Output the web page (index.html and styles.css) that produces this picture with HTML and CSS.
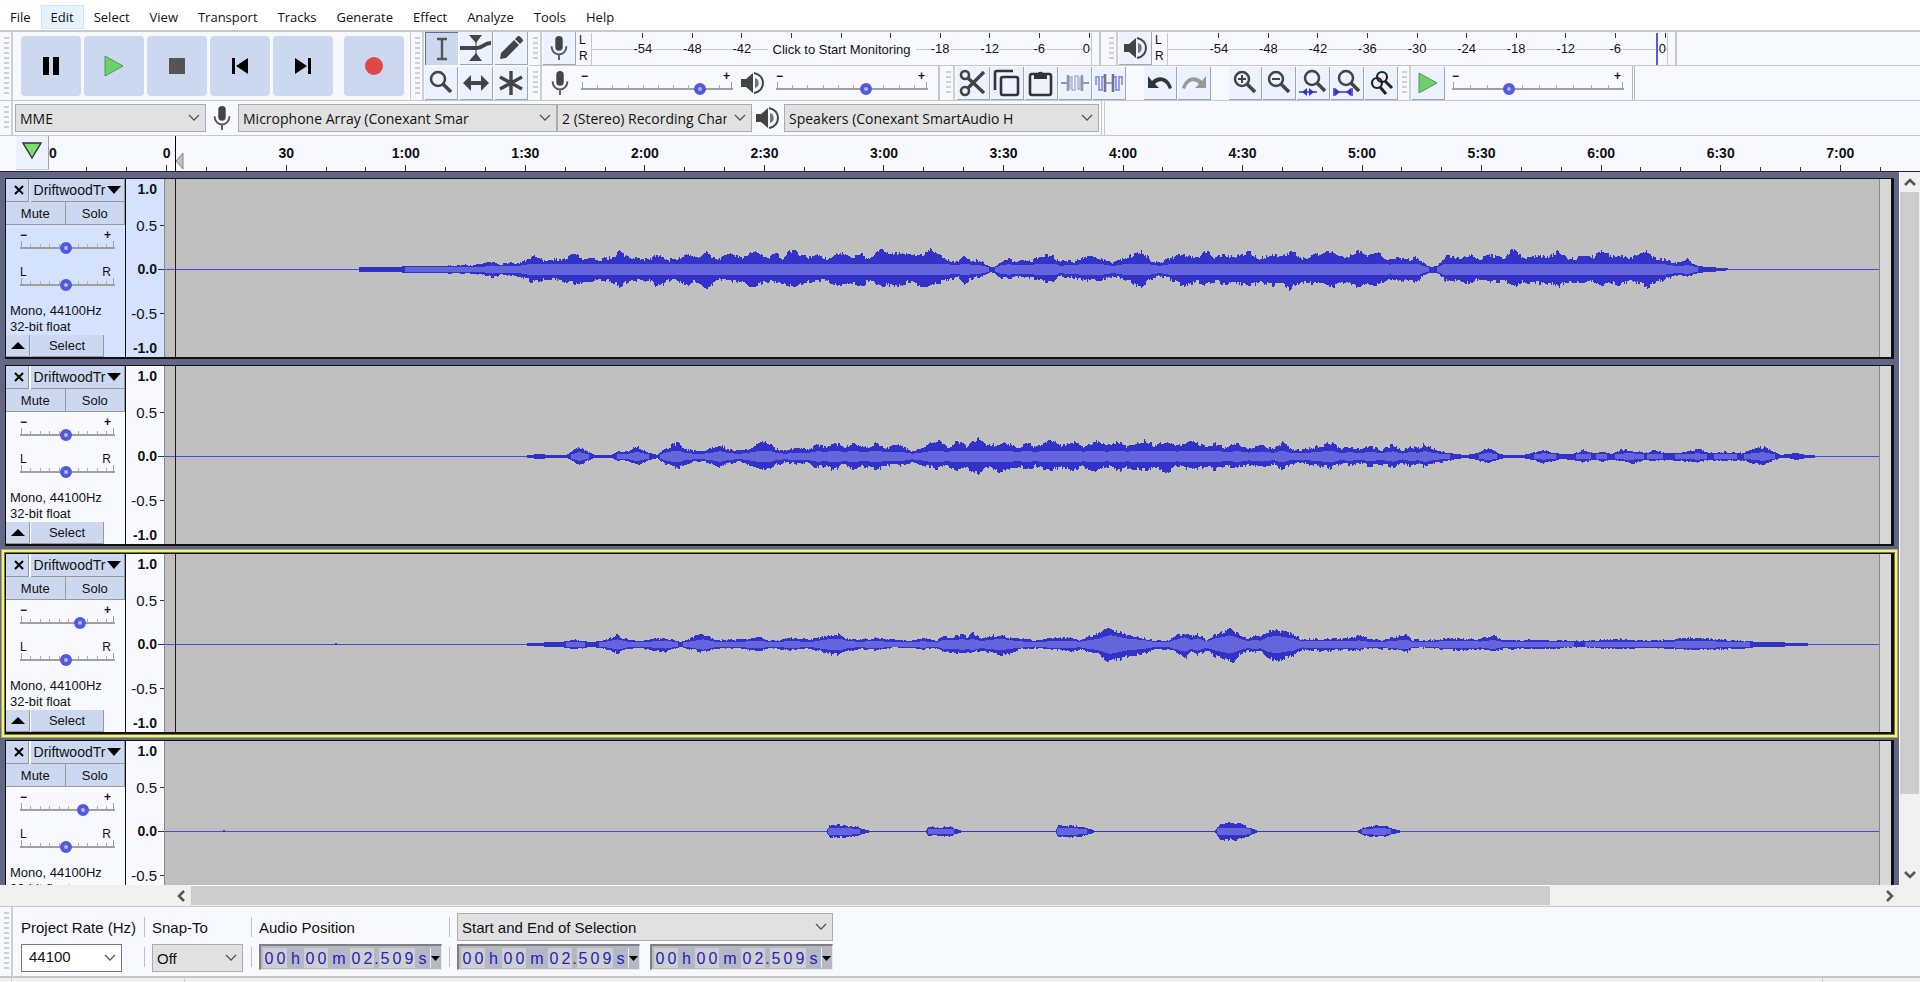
FILE: index.html
```html
<!DOCTYPE html>
<html lang="en">
<head>
<meta charset="utf-8">
<title>Audacity</title>
<link rel="stylesheet" href="styles.css">
</head>
<body>
<svg class="defs" aria-hidden="true">
  <symbol id="i-mic" viewBox="0 0 20 28"><rect x="6" y="1" width="8" height="16" rx="4" fill="#444"/><path d="M2 12c0 12 16 12 16 0M10 21v6" fill="none" stroke="#555" stroke-width="2"/></symbol>
  <symbol id="i-speaker" viewBox="0 0 24 24"><path d="M1 8h5l7-6v20l-7-6H1z" fill="#444"/><path d="M14 2c12 2 12 18 0 20" fill="none" stroke="#444" stroke-width="2"/><path d="M15 7c5 1 5 9 0 10z" fill="#777"/></symbol>
  <symbol id="i-chev" viewBox="0 0 12 12"><path d="M1 3l5 5 5-5" fill="none" stroke="#555" stroke-width="1.3"/></symbol>
  <symbol id="i-play" viewBox="0 0 20 22"><path d="M1 1v20l18-10z" fill="#6fd06b" stroke="#4f9a50" stroke-width="1"/></symbol>
  <symbol id="i-lens" viewBox="0 0 26 26"><circle cx="10" cy="9" r="7" fill="none" stroke="#444" stroke-width="2.5"/><path d="M15 14l8 8" stroke="#444" stroke-width="3.5"/></symbol>
</svg>

<nav class="menubar" aria-label="Main menu">
  <button>File</button><button class="hot">Edit</button><button>Select</button><button>View</button><button>Transport</button><button>Tracks</button><button>Generate</button><button>Effect</button><button>Analyze</button><button>Tools</button><button>Help</button>
</nav>

<div class="dock">
  <section class="bar transport" aria-label="Transport">
    <i class="grip"></i>
    <button aria-label="Pause"><svg width="18" height="18"><path d="M1 0h6v18H1zM11 0h6v18h-6z"/></svg></button>
    <button aria-label="Play"><svg width="20" height="22"><use href="#i-play"/></svg></button>
    <button aria-label="Stop"><svg width="16" height="16"><path d="M0 0h16v16H0z" fill="#555"/></svg></button>
    <button aria-label="Skip to start"><svg width="18" height="16"><path d="M1 0h3v16H1zM17 0v16L5 8z"/></svg></button>
    <button aria-label="Skip to end"><svg width="18" height="16"><path d="M14 0h3v16h-3zM1 0v16l12-8z"/></svg></button>
    <button class="record" aria-label="Record"><svg width="18" height="18"><circle cx="9" cy="9" r="9" fill="#e04848"/></svg></button>
  </section>

  <section class="bar tools" aria-label="Tools">
    <i class="grip"></i>
    <div class="toolgrid">
      <button class="tb on" aria-label="Selection tool"><svg width="14" height="24"><path d="M2 2h10M2 22h10M7 2v20" fill="none" stroke="#555" stroke-width="2.4"/></svg></button>
      <button class="tb" aria-label="Envelope tool"><svg width="32" height="28"><path d="M9 1h13l-6 8zM9 27h13l-6-8z" fill="#444"/><path d="M0 14h17c6 0 7-5 14-5" fill="none" stroke="#444" stroke-width="4"/><path d="M16 6v16" stroke="#444"/></svg></button>
      <button class="tb" aria-label="Draw tool"><svg width="26" height="26"><path d="M2 24l1-6L16 5l5 5L8 23zM17 4l3-3c1-1 6 4 5 5l-3 3z" fill="#444"/></svg></button>
      <button class="tb" aria-label="Zoom tool"><svg width="26" height="26"><use href="#i-lens"/></svg></button>
      <button class="tb" aria-label="Time shift tool"><svg width="28" height="18"><path d="M1 9l8-8v6h10V1l8 8-8 8v-6H9v6z" fill="#444"/></svg></button>
      <button class="tb" aria-label="Multi-tool"><svg width="26" height="26"><path d="M13 1v24M2 7l22 12M24 7L2 19" stroke="#444" stroke-width="3.4"/></svg></button>
    </div>
  </section>

  <div class="stack">
    <div class="line">
      <section class="bar meterbar" aria-label="Recording meter">
        <i class="grip"></i>
        <button class="tb" aria-label="Record meter"><svg width="20" height="26"><use href="#i-mic"/></svg></button>
        <div class="lr"><span>L</span><span>R</span></div>
        <div class="meter" data-labels="-54,-48,-42,,,,-18,-12,-6,0"><button class="monitor">Click to Start Monitoring</button></div>
      </section>
      <section class="bar meterbar" aria-label="Playback meter">
        <i class="grip"></i>
        <button class="tb" aria-label="Playback meter"><svg width="24" height="24"><use href="#i-speaker"/></svg></button>
        <div class="lr"><span>L</span><span>R</span></div>
        <div class="meter" data-labels="-54,-48,-42,-36,-30,-24,-18,-12,-6,0"><i class="peak"></i></div>
      </section>
    </div>
    <div class="line">
      <section class="bar mixer" aria-label="Mixer">
        <i class="grip"></i>
        <svg class="ico" width="20" height="26"><use href="#i-mic"/></svg>
        <div class="slider"><div class="ends"><b>−</b><b>+</b></div><input type="range" aria-label="Recording volume" min="0" max="100" value="81"></div>
        <svg class="ico out" width="24" height="24"><use href="#i-speaker"/></svg>
        <div class="slider"><div class="ends"><b>−</b><b>+</b></div><input type="range" aria-label="Playback volume" min="0" max="100" value="60"></div>
      </section>
      <section class="bar edit" aria-label="Edit">
        <i class="grip"></i>
        <button class="tb" aria-label="Cut"><svg width="28" height="28" fill="none" stroke="#444" stroke-width="2.6"><circle cx="6" cy="6" r="4"/><circle cx="6" cy="22" r="4"/><path d="M9 9l16 15M9 19L25 3" stroke-width="3.4"/></svg></button>
        <button class="tb" aria-label="Copy"><svg width="28" height="28" fill="none" stroke="#333" stroke-width="2.6"><path d="M2 21V4q0-2 2-2h16"/><rect x="8" y="8" width="17" height="18" rx="2"/></svg></button>
        <button class="tb" aria-label="Paste"><svg width="26" height="28"><rect x="2" y="5" width="21" height="21" rx="2" fill="none" stroke="#333" stroke-width="2.6"/><path d="M6 4h4a3 3 0 0 1 5 0h4v6H6z" fill="#333"/></svg></button>
        <button class="tb" aria-label="Trim audio"><svg width="28" height="24" fill="none"><path d="M0 12h6M22 12h6" stroke="#8a92c8" stroke-width="2"/><path d="M9 18V6h2v13h3V5h3v13h2V6" stroke="#a9b0dc" stroke-width="1.4"/><path d="M7 4v16M21 4v16" stroke="#999" stroke-width="2.6"/></svg></button>
        <button class="tb" aria-label="Silence audio"><svg width="28" height="24" fill="none"><path d="M1 14V6h3v13h3V6h2M19 6h2v13h3V6h3v8M10 12h8" stroke="#8a97ee" stroke-width="1.8"/><path d="M10 3v18M18 3v18" stroke="#777" stroke-width="2.6"/></svg></button>
        <button class="tb far" aria-label="Undo"><svg width="28" height="20"><path d="M2 3v12h11l-4-4c5-5 11-3 14 5l3-1C23 4 13 1 6 8z" fill="#333"/></svg></button>
        <button class="tb" aria-label="Redo"><svg width="28" height="20"><path d="M26 3v12H15l4-4C14 6 8 8 5 16l-3-1C5 4 15 1 22 8z" fill="#999"/></svg></button>
        <button class="tb far" aria-label="Zoom in"><svg width="26" height="26"><use href="#i-lens"/><path d="M6 9h8M10 5v8" stroke="#444" stroke-width="2"/></svg></button>
        <button class="tb" aria-label="Zoom out"><svg width="26" height="26"><use href="#i-lens"/><path d="M6 9h8" stroke="#444" stroke-width="2"/></svg></button>
        <button class="tb" aria-label="Fit selection"><svg width="28" height="28"><use href="#i-lens" x="3" width="26" height="26"/><path d="M0 23h18" stroke="#33c" stroke-width="1.5"/><path d="M3 23l5-4v8zM15 23l-5-4v8z" fill="#33c"/></svg></button>
        <button class="tb" aria-label="Fit project"><svg width="28" height="28"><use href="#i-lens" x="3" width="26" height="26"/><path d="M1 19v8M19 19v8M1 23h18" stroke="#33c" stroke-width="1.5"/><path d="M2 19l5 4-5 4zM18 19l-5 4 5 4z" fill="#33c"/></svg></button>
        <button class="tb" aria-label="Zoom toggle"><svg width="26" height="28" fill="none" stroke="#222" stroke-width="2.2"><circle cx="14" cy="8" r="5"/><circle cx="9" cy="14" r="5"/><path d="M17 12l7 7M12 18l6 7" stroke-width="3"/></svg></button>
      </section>
      <section class="bar speed" aria-label="Play at speed">
        <i class="grip"></i>
        <button class="tb" aria-label="Play at speed"><svg width="20" height="22"><use href="#i-play"/></svg></button>
        <div class="slider"><div class="ends"><b>−</b><b>+</b></div><input type="range" aria-label="Playback speed" min="0" max="100" value="32"></div>
      </section>
    </div>
  </div>
</div>

<div class="devices">
  <i class="grip"></i>
  <div class="pick host"><select aria-label="Audio host"><option>MME</option></select><svg width="12" height="12"><use href="#i-chev"/></svg></div>
  <svg class="ico" width="20" height="26"><use href="#i-mic"/></svg>
  <div class="pick input"><select aria-label="Recording device"><option>Microphone Array (Conexant Smar</option></select><svg width="12" height="12"><use href="#i-chev"/></svg></div>
  <div class="pick chans"><select aria-label="Recording channels"><option>2 (Stereo) Recording Channels</option></select><svg width="12" height="12"><use href="#i-chev"/></svg></div>
  <svg class="ico wide" width="24" height="24"><use href="#i-speaker"/></svg>
  <div class="pick output"><select aria-label="Playback device"><option>Speakers (Conexant SmartAudio H</option></select><svg width="12" height="12"><use href="#i-chev"/></svg></div>
  <i class="end"></i>
</div>

<div class="timeline">
  <button class="pin" aria-label="Pin play head"><svg width="20" height="18"><path d="M1 1h18L10 16z" fill="#7ddc6e" stroke="#333" stroke-width="1.4"/></svg></button>
  <div class="lead"><span>0</span><i></i></div>
  <div class="scale"></div>
  <svg class="playhead" width="9" height="35"><path d="M0 0h1v35H0z" shape-rendering="crispEdges"/><path d="M8 17v16L1 25z" fill="#c0c0c0" stroke="#888"/></svg>
</div>

<div class="workspace">
  <main class="tracks"></main>
  <div class="vscroll"><button aria-label="Scroll up"><svg width="12" height="10"><path d="M1 8l5-5 5 5" fill="none" stroke="#555" stroke-width="2.5"/></svg></button><div class="vrun"><i></i></div><button aria-label="Scroll down"><svg width="12" height="10"><path d="M1 2l5 5 5-5" fill="none" stroke="#555" stroke-width="2.5"/></svg></button></div>
</div>
<div class="hscroll"><button aria-label="Scroll left"><svg width="10" height="12"><path d="M8 1L3 6l5 5" fill="none" stroke="#555" stroke-width="2.5"/></svg></button><div class="hrun"><i></i></div><button aria-label="Scroll right"><svg width="10" height="12"><path d="M2 1l5 5-5 5" fill="none" stroke="#555" stroke-width="2.5"/></svg></button></div>

<footer class="selection">
  <i class="grip"></i>
  <div class="col rate"><label for="rate">Project Rate (Hz)</label><div class="pick white"><input id="rate" value="44100"><svg width="12" height="12"><use href="#i-chev"/></svg></div></div>
  <div class="seps"><i></i><i></i></div>
  <div class="col snap"><label for="snap">Snap-To</label><div class="pick"><select id="snap"><option>Off</option></select><svg width="12" height="12"><use href="#i-chev"/></svg></div></div>
  <div class="seps"><i></i><i></i></div>
  <div class="col"><span class="cap">Audio Position</span><div class="time"></div></div>
  <div class="seps"><i></i><i></i></div>
  <div class="col range"><div class="pick"><select aria-label="Selection format"><option>Start and End of Selection</option></select><svg width="12" height="12"><use href="#i-chev"/></svg></div><div class="pair"><div class="time"></div><div class="time"></div></div></div>
</footer>
<div class="status"><i></i><i></i><i></i></div>
<script src="app.js"></script>
</body>
</html>
```
FILE: styles.css
```css
* { box-sizing: border-box; }
body { margin: 0; height: 100vh; display: flex; flex-direction: column; overflow: hidden; background: #f8f9ff; color: #111; font: 13px "Liberation Sans", Arial, sans-serif; }
button, select, input { font: inherit; color: inherit; margin: 0; padding: 0; border: 0; border-radius: 0; background: none; }
button { display: flex; align-items: center; justify-content: center; }
svg { display: block; flex: none; }
.defs { position: absolute; width: 0; height: 0; }

.menubar { display: flex; height: 30px; padding: 5px 0 1px; background: #fff; font: 13px "Open Sans", sans-serif; }
.menubar button { padding: 0 9px; border: 1px solid transparent; white-space: nowrap; }
.menubar .hot { background: #e5f3ff; border-color: #cce8ff; }

.grip { flex: none; width: 13px; border-right: 2px solid #d0d0d4; background: repeating-linear-gradient(#d0d0d4 0 2px, transparent 2px 5px) 4px 5px / 5px calc(100% - 10px) no-repeat; }
.dock { display: flex; border-top: 2px solid #c8c8c8; border-bottom: 1px solid #c8c8c8; height: 71px; flex: none; }
.bar { display: flex; align-items: center; }
.bar > .grip { align-self: stretch; }
.transport { gap: 3px; width: 411px; border-right: 1px solid #c8c8c8; }
.transport .grip { margin-right: 5px; }
.transport button { flex: none; width: 60px; height: 60px; border-radius: 4px; background: #ccd8f0; }
.transport .record { margin-left: 8px; }
.toolgrid { display: grid; grid-template-columns: repeat(3, 33px); grid-auto-rows: 33px; gap: 2px; margin: 0 1px 0 1px; }
.tb { flex: none; width: 33px; height: 33px; background: #ecf2ff; border-right: 1px solid #a0a6b8; border-bottom: 1px solid #a0a6b8; overflow: hidden; }
.tb.on { background: #ccd8f0; border: 0; border-left: 1px solid #666e88; border-top: 1px solid #666e88; }
.stack { flex: 1; min-width: 0; }
.line { display: flex; height: 34px; }
.line:first-child { border-bottom: 1px solid #c8c8c8; }
.meterbar { height: 33px; padding-right: 7px; margin-right: 4px; border-right: 2px solid #c8c8c8; }
.meterbar .tb { margin: 0 3px 0 1px; }
.lr { display: flex; flex-direction: column; width: 12px; height: 34px; line-height: 16px; font-size: 12px; }
.meter { position: relative; display: flex; width: 501px; height: 32px; padding-left: 26px; border-left: 1px solid #c8c8c8; border-right: 1px solid #c8c8c8; background: linear-gradient(#c8c8c8, #c8c8c8) 0 16px / 100% 1px no-repeat; }
.mark { flex: 1; display: flex; flex-direction: column; align-items: center; gap: 4px; line-height: 14px; }
.mark:last-of-type { flex: 0 0 27px; align-items: flex-end; padding-right: 1px; }
.mark i { width: 1px; height: 5px; background: #333; }
.mark span { background: #f8f9ff; }
.monitor { position: absolute; left: 50%; top: 8px; transform: translateX(-50%); padding: 1px 5px; white-space: nowrap; background: #f8f9ff; }
.peak { position: absolute; right: 9px; top: 0; width: 2px; height: 32px; background: #5058f0; }
.ico { margin: 0 8px; }
.slider { display: flex; flex-direction: column; }
.ends { display: flex; justify-content: space-between; padding: 0 3px 0 0; height: 12px; line-height: 12px; font-size: 12px; }
input[type=range] { -webkit-appearance: none; appearance: none; display: block; width: 100%; height: 14px; background: linear-gradient(#a0a0a0, #a0a0a0) 1px 0 / 1px 6px no-repeat, linear-gradient(#a0a0a0, #a0a0a0) calc(100% - 1px) 0 / 1px 6px no-repeat, repeating-linear-gradient(90deg, #b0b0b0 0 1px, transparent 1px 10%) 1px 3px / 100% 3px no-repeat; }
input[type=range]::-webkit-slider-runnable-track { height: 2px; background: #a0a0a0; }
input[type=range]::-webkit-slider-thumb { -webkit-appearance: none; width: 12px; height: 12px; margin-top: -5px; border: 4px solid #5058e8; border-radius: 50%; background: #bbb; }
.mixer { padding-right: 10px; border-right: 2px solid #c8c8c8; margin-right: 2px; }
.mixer .slider { width: 152px; }
.mixer .ico { margin: 0 11px 0 8px; }
.mixer .ico.out { margin: 0 12px 0 7px; }
.edit { gap: 1px; }
.edit .grip { margin-right: 1px; }
.edit .far { margin-left: 17px; }
.speed { gap: 1px; padding-right: 8px; border-right: 3px double #b8b8b8; }
.speed .slider { width: 172px; margin-left: 6px; }

.devices { display: flex; align-items: center; height: 35px; flex: none; border-bottom: 1px solid #c8c8c8; font: 14px "Open Sans", sans-serif; }
.devices .grip, .devices .end { align-self: stretch; }
.devices .end { width: 4px; margin-left: 2px; border-left: 1px solid #c8c8c8; border-right: 1px solid #c8c8c8; }
.pick { display: grid; align-items: center; height: 28px; border: 1px solid #adadad; background: #e1e1e1; min-width: 0; }
.pick > * { grid-area: 1 / 1; }
.pick select, .pick input { -webkit-appearance: none; appearance: none; width: 100%; min-width: 0; height: 26px; padding: 0 24px 0 4px; outline: 0; }
.pick svg { justify-self: end; margin-right: 5px; pointer-events: none; }
.host { width: 191px; margin-left: 2px; border-color: #9bb0bc; }
.devices .ico { margin: 0 6px; }
.devices .ico.wide { margin: 0 5px 0 3px; }
.input { width: 319px; }
.chans { width: 195px; }
.output { width: 315px; }

.timeline { position: relative; display: flex; flex: none; height: 36px; border-bottom: 1px solid #222; padding-left: 16px; font: bold 14px/35px "Liberation Sans", Arial, sans-serif; }
.pin { width: 33px; height: 34px; padding-bottom: 4px; background: #ecf2ff; border-right: 1px solid #a0a6b8; border-bottom: 1px solid #c8c8c8; }
.lead { display: flex; width: 58px; justify-content: space-between; align-items: flex-end; }
.lead i { width: 1px; height: 4px; margin-right: 20px; background: #333; }
.scale { flex: 1; display: flex; margin-right: 20px; }
.cell { flex: 1; display: grid; text-align: center; min-width: 0; }
.cell > * { grid-area: 1 / 1; }
.cell div { display: flex; align-items: flex-end; justify-content: space-around; }
.cell i { width: 1px; height: 4px; background: #333; }
.cell i:nth-child(2) { height: 6px; }
.playhead { position: absolute; left: 175px; top: 0; }

.workspace { flex: 1; min-height: 0; display: flex; }
.tracks { flex: 1; min-width: 0; display: flex; flex-direction: column; gap: 6px; padding: 6px 5px 0 5px; background: #626785; overflow: hidden; }
.track { flex: none; display: flex; height: 181px; border: solid #111; border-width: 1px 3px 2px 1px; background: #f8f9ff; }
.track.focus { margin-top: 1px; box-shadow: 0 0 0 1px #77793c, 0 0 0 3px #f4f478, 0 0 0 4px #a8a870; }
.track.sel { background: #d5e2ff; }
.panel { width: 120px; border-right: 1px solid #111; display: flex; flex-direction: column; }
.panel button { background: #ccd8f0; border-right: 1px solid #999; border-bottom: 1px solid #999; }
.row { display: flex; height: 23px; flex: none; }
.row .x { width: 23px; margin-right: 2px; padding-left: 3px; }
.row .name { flex: 1; gap: 2px; font-size: 14px; }
.row .half { flex: 1; }
.panel .slider { margin: 4px 10px 0 14px; }
.panel .slider .ends { padding: 0 4px 0 0; }
.panel .slider.pan { margin-top: 11px; }
.info { margin: 11px 0 0 4px; line-height: 16px; white-space: nowrap; }
.foot { display: flex; height: 22px; margin-top: auto; }
.foot .x { width: 24px; margin-right: 1px; padding-left: 1px; }
.foot .pickall { width: 73px; }
.vruler { width: 39px; display: grid; grid-template-rows: 20px 52px 36px 52px 18px; border-right: 1px solid #888; font-size: 15px; }
.vruler div { display: flex; align-items: center; justify-content: flex-end; gap: 3px; }
.vruler i { width: 4px; height: 1px; background: #333; }
.vruler .big { font-weight: bold; font-size: 14px; }
.vruler .big i { background: transparent; }
.vruler .zero i { width: 6px; background: #333; margin-left: -2px; }
.clip { position: relative; flex: 1; min-width: 0; background: #c0c0c0; }
.clip svg { width: 100%; height: 178px; }
.clip .cur { position: absolute; left: 10px; top: 0; width: 1px; height: 100%; background: #301010; }
.tail { width: 12px; border-left: 1px solid #888; background: #d8d8d8; }
.vscroll { width: 21px; border-left: 1px solid #fff; background: #f0f0f0; display: flex; flex-direction: column; }
.vscroll button { height: 20px; width: 19px; }
.vrun { flex: 1; }
.vrun i { display: block; width: 19px; height: 89.5%; background: #cdcdcd; }
.hscroll { display: flex; flex: none; height: 21px; padding: 0 20px 0 170px; background: #f0f0f0; }
.hscroll button { width: 21px; }
.hrun { flex: 1; }
.hrun i { display: block; width: 80.5%; height: 20px; background: #cdcdcd; border-top: 1px solid #fff; }

.selection { display: flex; flex: none; height: 72px; border-top: 1px solid #c8c8c8; border-bottom: 2px solid #c8c8c8; font-size: 15px; }
.col { display: flex; flex-direction: column; padding-top: 6px; gap: 3px; }
.col label, .cap { height: 28px; line-height: 30px; white-space: nowrap; }
.col .pick { height: 28px; }
.rate { width: 116px; margin-left: 8px; }
.rate .pick { width: 101px; background: #fff; border-color: #777; }
.rate input { padding-left: 7px; padding-bottom: 3px; }
.snap { width: 91px; }
.seps { display: flex; flex-direction: column; gap: 10px; padding: 10px 7px 0 7px; }
.seps i { width: 1px; height: 20px; background: #c0c0c0; }
.snap + .seps { padding-left: 8px; }
.range { width: 376px; }
.pair { display: flex; justify-content: space-between; }
.time { display: flex; width: 183px; height: 26px; padding: 2px 1px 1px 2px; border: solid; border-width: 2px 1px 1px 2px; border-color: #808080 #e8e8e8 #e8e8e8 #808080; background: #b3b8c4; color: #2222c0; font-size: 16px; line-height: 21px; text-align: center; }
.time span { flex: none; }
.time .d { width: 12px; background: #cfcfcf; }
.time .h { width: 17px; }
.time .m { width: 22px; }
.time .p { width: 5px; }
.time .s { width: 15px; }
.time button { flex: 1; border-left: 1px solid #eee; }
.status { flex: none; display: flex; justify-content: space-between; height: 4px; padding: 0 97px 0 11px; background: #f0f0f0; }
.status i { width: 1px; background: #d0d0d0; }
.status i:nth-child(1) { margin-right: 172px; }
.status i:nth-child(2) { margin-right: auto; }
```
FILE: app.js
```js
const fill = (sel, fn) => document.querySelectorAll(sel).forEach(fn);

fill('.meter', m => {
  m.insertAdjacentHTML('afterbegin', m.dataset.labels.split(',').map(t => `<div class="mark"><i></i>${t ? `<span>${t}</span>` : ''}</div>`).join(''));
});

const labels = ['0', '30', '1:00', '1:30', '2:00', '2:30', '3:00', '3:30', '4:00', '4:30', '5:00', '5:30', '6:00', '6:30', '7:00'];
document.querySelector('.scale').innerHTML = labels.map(t => `<div class="cell"><span>${t}</span><div><i></i><i></i><i></i></div></div>`).join('');

const timeCells = [...'00h00m02.509s'].map(c => `<span class="${/\d/.test(c) ? 'd' : c === '.' ? 'p' : c}">${c}</span>`).join('');
fill('.time', t => { t.innerHTML = timeCells + '<button aria-label="Time format"><svg width="9" height="5"><path d="M0 0h9L4.5 5z"/></svg></button>'; });

// Envelope points: window x, level above the axis, level below the axis.
const env1 = [[359,2,2],[399,2,2],[405,3,3],[443,3,3],[469,4,4],[483,5,4],[492,7,7],[500,5,5],[510,6,6],[518,6,6],[530,9,11],[534,14,12],[543,8,10],[552,10,10],[563,9,11],[572,14,13],[577,14,14],[583,9,12],[592,10,11],[599,9,10],[608,11,11],[615,12,12],[619,19,18],[623,14,13],[632,10,11],[641,11,11],[648,9,9],[655,13,15],[661,14,15],[668,9,10],[679,11,12],[688,14,14],[697,10,11],[704,18,19],[711,13,15],[717,10,10],[731,14,12],[742,12,11],[748,15,16],[755,18,15],[762,12,13],[769,11,11],[776,15,13],[782,11,12],[789,17,15],[794,18,18],[800,14,13],[809,11,12],[818,14,11],[824,10,10],[831,12,12],[839,17,15],[847,13,12],[856,13,14],[862,14,15],[869,9,10],[876,17,13],[882,20,16],[887,15,15],[898,15,16],[907,14,12],[916,14,14],[923,15,16],[930,20,16],[936,14,13],[943,11,12],[954,6,8],[958,8,7],[964,13,13],[970,8,9],[978,9,7],[985,5,5],[990,2,2],[994,2,3],[1001,8,8],[1009,10,9],[1016,7,7],[1025,9,8],[1032,8,8],[1039,13,11],[1053,13,12],[1059,7,6],[1068,8,7],[1074,7,8],[1084,12,10],[1100,10,10],[1113,6,6],[1127,12,10],[1136,15,16],[1142,17,16],[1150,9,9],[1159,6,6],[1169,10,9],[1182,15,16],[1192,11,13],[1198,11,12],[1205,18,15],[1214,12,11],[1224,14,14],[1235,12,12],[1249,17,16],[1260,10,12],[1272,15,15],[1283,13,14],[1289,16,19],[1293,17,15],[1302,10,12],[1315,14,13],[1332,17,17],[1345,11,11],[1357,18,18],[1366,13,14],[1377,17,15],[1389,9,8],[1398,11,11],[1407,9,9],[1416,12,12],[1423,6,5],[1430,2,3],[1437,3,3],[1446,13,11],[1458,11,11],[1470,14,14],[1478,9,9],[1490,13,12],[1504,12,11],[1514,20,17],[1522,11,12],[1536,12,13],[1550,13,13],[1559,18,16],[1568,10,11],[1579,12,12],[1591,11,11],[1601,18,16],[1612,12,13],[1618,14,15],[1630,11,11],[1641,16,14],[1647,17,17],[1655,11,12],[1669,8,8],[1678,6,5],[1687,9,7],[1697,3,3],[1708,2,2],[1722,1,1],[1728,1,0]];
const env2 = [[527,1,1],[540,2,2],[549,1,1],[566,1,1],[573,5,4],[579,9,8],[586,5,4],[594,1,1],[611,1,1],[619,5,4],[627,4,4],[637,10,9],[646,4,4],[657,1,1],[665,8,7],[677,13,12],[685,7,7],[698,4,4],[709,7,6],[720,11,11],[728,6,6],[741,5,5],[752,8,9],[765,15,13],[775,7,8],[785,5,5],[798,8,7],[806,6,6],[817,11,10],[826,9,9],[833,14,13],[844,9,8],[852,12,11],[864,8,9],[876,13,12],[885,8,9],[900,10,9],[912,5,5],[924,9,8],[937,15,12],[946,9,8],[958,14,13],[966,10,10],[978,17,17],[987,10,10],[998,12,14],[1006,14,12],[1016,8,9],[1025,12,11],[1036,9,9],[1050,16,13],[1062,10,10],[1074,13,13],[1083,9,10],[1096,15,14],[1106,9,9],[1117,14,14],[1126,9,10],[1145,15,13],[1155,10,10],[1168,15,15],[1176,10,9],[1193,15,13],[1203,10,10],[1215,12,12],[1226,8,9],[1237,12,10],[1248,7,8],[1262,10,10],[1273,7,7],[1282,13,12],[1290,7,7],[1301,6,6],[1315,9,8],[1331,13,11],[1340,7,7],[1350,9,8],[1360,6,6],[1369,10,9],[1380,6,7],[1393,11,10],[1402,5,6],[1411,10,9],[1417,7,7],[1424,12,10],[1433,7,6],[1445,4,5],[1455,2,2],[1466,1,1],[1478,3,3],[1488,8,7],[1497,3,3],[1504,1,1],[1522,1,1],[1532,3,3],[1543,6,6],[1552,4,4],[1561,2,2],[1572,2,3],[1583,6,5],[1592,3,3],[1602,4,4],[1612,2,3],[1622,7,4],[1632,5,7],[1645,3,3],[1653,5,4],[1665,3,3],[1680,3,4],[1698,7,5],[1708,3,3],[1725,4,4],[1742,3,3],[1752,6,6],[1763,9,8],[1772,5,4],[1780,1,1],[1788,2,1],[1796,3,3],[1806,1,1],[1815,1,1]];
const env3 = [[527,1,1],[560,2,2],[575,4,4],[590,2,2],[602,3,3],[617,9,8],[628,4,4],[640,3,3],[665,6,7],[680,2,2],[703,10,7],[715,4,4],[735,4,3],[760,6,6],[770,3,3],[780,4,4],[789,6,5],[800,5,4],[813,5,4],[822,7,7],[831,10,9],[840,9,10],[847,5,6],[858,4,4],[876,6,5],[892,4,3],[909,3,3],[923,6,4],[936,3,3],[943,7,7],[954,7,7],[962,9,9],[967,7,7],[972,11,7],[981,5,6],[992,8,8],[1002,9,9],[1010,6,8],[1019,6,4],[1034,3,3],[1050,6,4],[1070,6,6],[1079,3,5],[1088,8,6],[1097,10,8],[1104,13,14],[1110,15,17],[1119,11,14],[1130,8,10],[1142,6,9],[1155,3,4],[1168,4,4],[1177,9,8],[1184,10,14],[1191,8,7],[1197,10,10],[1206,4,6],[1215,9,11],[1229,15,16],[1233,12,16],[1240,9,9],[1247,5,6],[1254,8,7],[1260,6,6],[1267,12,12],[1276,14,16],[1282,12,14],[1293,10,10],[1302,4,5],[1313,5,5],[1325,5,6],[1342,5,5],[1359,8,5],[1369,5,3],[1383,4,4],[1398,8,5],[1407,9,7],[1412,4,3],[1432,4,3],[1445,6,5],[1461,5,5],[1480,5,4],[1493,8,7],[1502,4,4],[1540,4,4],[1580,3,2],[1620,5,4],[1650,3,3],[1690,6,5],[1730,4,4],[1760,2,2],[1808,1,1]];
const env4 = [[826,0,0],[829,5,5],[835,6,5],[846,5,5],[858,4,4],[861,2,2],[868,1,1],[869,0,0],[925,0,0],[928,4,4],[950,4,4],[955,2,2],[960,1,1],[961,0,0],[1055,0,0],[1058,5,5],[1075,5,5],[1086,3,3],[1093,1,1],[1094,0,0],[1214,0,0],[1220,7,7],[1232,8,8],[1242,6,7],[1250,3,3],[1256,1,1],[1257,0,0],[1357,0,0],[1362,3,3],[1375,5,5],[1386,5,4],[1392,2,2],[1399,1,1],[1400,0,0]];

function wave(env, ratio, cap, blip) {
  const x0 = 165, mid = 90;
  let top = '', bottom = '', inTop = '', inBottom = '', k = 0, seed = 7, nu = 0, nd = 0;
  const rnd = () => (seed = (seed * 16807) % 2147483647) / 2147483647;
  for (let x = env[0][0]; x < env[env.length - 1][0]; x++) {
    while (env[k + 1][0] <= x) k++;
    const a = env[k], b = env[k + 1], t = (x - a[0]) / (b[0] - a[0]);
    let u = a[1] + (b[1] - a[1]) * t, d = a[2] + (b[2] - a[2]) * t;
    const inner = Math.min(cap, Math.round((u + d) / 2 * ratio));
    if (rnd() > .4) { nu = rnd() - .5; nd = rnd() - .5; }
    if (u > 3) { u += nu * Math.min(4, u * .4); d += nd * Math.min(4, d * .4); }
    const px = x - x0, yu = mid - Math.round(u), yd = mid + 1 + Math.round(d);
    top += `L${px} ${yu}h1`;
    bottom = `L${px + 1} ${yd}h-1` + bottom;
    inTop += `L${px} ${mid - (inner > 1 ? inner : -.5)}h1`;
    inBottom = `L${px + 1} ${mid + (inner > 1 ? inner + 1 : .5)}h-1` + inBottom;
  }
  const s = `M${env[0][0] - x0} ${mid}`;
  const spot = blip ? `<path d="M${blip - x0} 89h2v2h-2z" fill="#3232c8"/>` : '';
  return `<svg viewBox="0 0 1714 178" preserveAspectRatio="none" shape-rendering="crispEdges"><path d="M0 90h1714v1H0z" fill="#4848d0"/>${spot}<path d="${s}${top}${bottom}z" fill="#3232c8"/><path d="${s}${inTop}${inBottom}z" fill="#6464dc"/></svg>`;
}

const tracks = [
  { cls: 'sel', vol: 48, svg: wave(env1, .5, 5) },
  { cls: '', vol: 48, svg: wave(env2, .45, 5) },
  { cls: 'focus', vol: 65, svg: wave(env3, .55, 9, 335) },
  { cls: '', vol: 69, svg: wave(env4, .55, 3, 223) }
];
document.querySelector('.tracks').innerHTML = tracks.map((t, i) => `
<section class="track ${t.cls}">
  <div class="panel">
    <div class="row"><button class="x" aria-label="Close track"><svg width="10" height="10"><path d="M1 1l8 8M9 1L1 9" stroke="#000" stroke-width="2"/></svg></button><button class="name">DriftwoodTr<svg width="14" height="8"><path d="M0 0h14L7 8z"/></svg></button></div>
    <div class="row"><button class="half">Mute</button><button class="half">Solo</button></div>
    <div class="slider"><div class="ends"><b>−</b><b>+</b></div><input type="range" aria-label="Gain" value="${t.vol}"></div>
    <div class="slider pan"><div class="ends"><span>L</span><span>R</span></div><input type="range" aria-label="Pan" value="48"></div>
    <div class="info">Mono, 44100Hz<br>32-bit float</div>
    <div class="foot"><button class="x" aria-label="Collapse"><svg width="14" height="7"><path d="M0 7h14L7 0z"/></svg></button><button class="pickall">Select</button></div>
  </div>
  <div class="vruler"><div class="big">1.0<i></i></div><div>0.5<i></i></div><div class="big zero">0.0<i></i></div><div>-0.5<i></i></div><div class="big">-1.0<i></i></div></div>
  <div class="clip">${t.svg}${i < 3 ? '<i class="cur"></i>' : ''}</div>
  <div class="tail"></div>
</section>`).join('');
```
